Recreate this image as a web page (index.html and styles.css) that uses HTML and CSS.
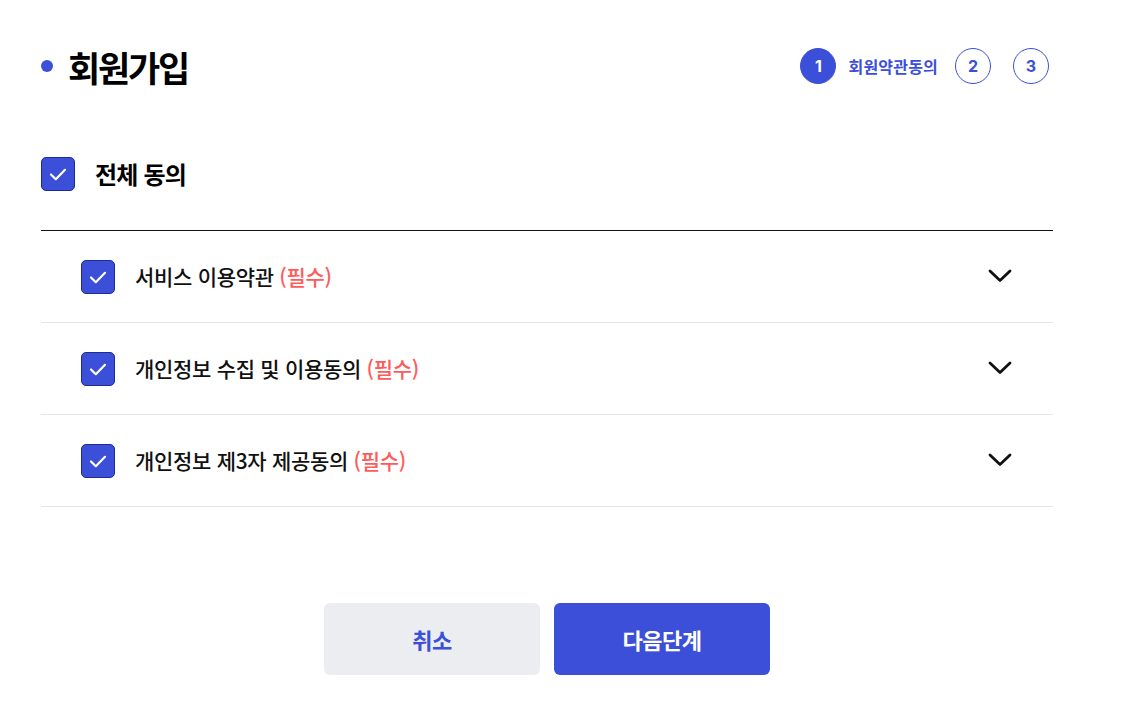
FILE: index.html
```html
<!DOCTYPE html>
<html lang="ko">
<head>
<meta charset="utf-8">
<title>회원가입</title>
<link rel="stylesheet" href="styles.css">
</head>
<body>
<div class="page">
  <header class="header">
    <h1 class="title"><span class="dot"></span>회원가입</h1>
    <ol class="steps">
      <li class="step active"><span class="num">1</span><span class="label">회원약관동의</span></li>
      <li class="step"><span class="num">2</span></li>
      <li class="step"><span class="num">3</span></li>
    </ol>
  </header>

  <div class="all-agree">
    <span class="check">
      <svg viewBox="0 0 34 34" width="34" height="34"><path d="M10 17.5 L14.8 22.2 L24 12.8" fill="none" stroke="#fff" stroke-width="2.2" stroke-linecap="round" stroke-linejoin="round"/></svg>
    </span>
    <span class="all-label">전체 동의</span>
  </div>

  <ul class="terms">
    <li class="term">
      <span class="check">
        <svg viewBox="0 0 34 34" width="34" height="34"><path d="M10 17.5 L14.8 22.2 L24 12.8" fill="none" stroke="#fff" stroke-width="2.2" stroke-linecap="round" stroke-linejoin="round"/></svg>
      </span>
      <span class="term-label">서비스 이용약관 <em class="req">(필수)</em></span>
      <svg class="chev" viewBox="0 0 24 24" width="24" height="24"><path d="M2 6 L12 15.5 L22 6" fill="none" stroke="#111" stroke-width="2.8" stroke-linecap="round" stroke-linejoin="round"/></svg>
    </li>
    <li class="term">
      <span class="check">
        <svg viewBox="0 0 34 34" width="34" height="34"><path d="M10 17.5 L14.8 22.2 L24 12.8" fill="none" stroke="#fff" stroke-width="2.2" stroke-linecap="round" stroke-linejoin="round"/></svg>
      </span>
      <span class="term-label">개인정보 수집 및 이용동의 <em class="req">(필수)</em></span>
      <svg class="chev" viewBox="0 0 24 24" width="24" height="24"><path d="M2 6 L12 15.5 L22 6" fill="none" stroke="#111" stroke-width="2.8" stroke-linecap="round" stroke-linejoin="round"/></svg>
    </li>
    <li class="term">
      <span class="check">
        <svg viewBox="0 0 34 34" width="34" height="34"><path d="M10 17.5 L14.8 22.2 L24 12.8" fill="none" stroke="#fff" stroke-width="2.2" stroke-linecap="round" stroke-linejoin="round"/></svg>
      </span>
      <span class="term-label">개인정보 제3자 제공동의 <em class="req">(필수)</em></span>
      <svg class="chev" viewBox="0 0 24 24" width="24" height="24"><path d="M2 6 L12 15.5 L22 6" fill="none" stroke="#111" stroke-width="2.8" stroke-linecap="round" stroke-linejoin="round"/></svg>
    </li>
  </ul>

  <div class="actions">
    <button class="btn btn-cancel" type="button">취소</button>
    <button class="btn btn-next" type="button">다음단계</button>
  </div>
</div>
</body>
</html>
```

FILE: styles.css
```css
* { box-sizing: border-box; }
html, body { margin: 0; padding: 0; background: #fff; }
body {
  font-family: "Noto Sans CJK KR", "Noto Sans", sans-serif;
  color: #111;
}
.page {
  width: 1012px;
  margin-left: 41px;
  padding-top: 40px;
}
.header {
  height: 52px;
  display: flex;
  align-items: center;
  justify-content: space-between;
  padding-right: 4px;
}
.title {
  margin: 0;
  display: flex;
  align-items: center;
  font-size: 35px;
  line-height: 1;
  font-weight: 700;
  letter-spacing: -2.2px;
  color: #000;
}
.dot {
  width: 12px;
  height: 12px;
  border-radius: 50%;
  background: #3b4fd8;
  margin-right: 15px;
  margin-top: 0;
}
.steps {
  list-style: none;
  margin: 0;
  padding: 0;
  display: flex;
  align-items: center;
  gap: 22px;
}
.step {
  display: flex;
  align-items: center;
  gap: 12px;
}
.step.active { margin-right: -5px; }
.num {
  width: 36px;
  height: 36px;
  border-radius: 50%;
  border: 1px solid #3b4fd8;
  color: #3b4fd8;
  display: flex;
  align-items: center;
  justify-content: center;
  font-family: "Inter", "Noto Sans", sans-serif;
  font-size: 16px;
  font-weight: 700;
}
.step.active .num {
  background: #3b4fd8;
  color: #fff;
}
.label {
  font-size: 16px;
  font-weight: 700;
  color: #3b4fd8;
  letter-spacing: 0.2px;
}
.check {
  width: 34px;
  height: 34px;
  flex: none;
  border-radius: 5px;
  background: #3b4fd8;
  border: 1px solid #1f2b93;
  display: flex;
  align-items: center;
  justify-content: center;
  overflow: hidden;
}
.check svg { display: block; flex: none; }
.all-agree {
  margin-top: 65px;
  padding-bottom: 39px;
  border-bottom: 1px solid #111;
  display: flex;
  align-items: center;
  gap: 20px;
}
.all-label {
  font-size: 24px;
  line-height: 1;
  font-weight: 700;
  letter-spacing: -0.8px;
  color: #000;
}
.terms {
  list-style: none;
  margin: 0;
  padding: 0;
}
.term {
  height: 92px;
  border-bottom: 1px solid #e6e6e6;
  display: flex;
  align-items: center;
  padding: 0 41px 0 40px;
  gap: 20px;
}
.term-label {
  flex: 1;
  font-size: 21px;
  line-height: 1;
  font-weight: 500;
  letter-spacing: -0.3px;
  color: #111;
}
.req {
  font-style: normal;
  color: #ff5b5b;
}
.chev { flex: none; display: block; }
.actions {
  margin-top: 96px;
  display: flex;
  justify-content: center;
  gap: 14px;
}
.btn {
  width: 216px;
  height: 72px;
  border: none;
  border-radius: 6px;
  font-family: "Noto Sans CJK KR", "Noto Sans", sans-serif;
  font-size: 22px;
  font-weight: 700;
  letter-spacing: -0.5px;
  cursor: pointer;
}
.btn-cancel {
  background: #ecedf0;
  color: #3b4fd8;
}
.btn-next {
  background: #3b4fd8;
  color: #fff;
}
```
